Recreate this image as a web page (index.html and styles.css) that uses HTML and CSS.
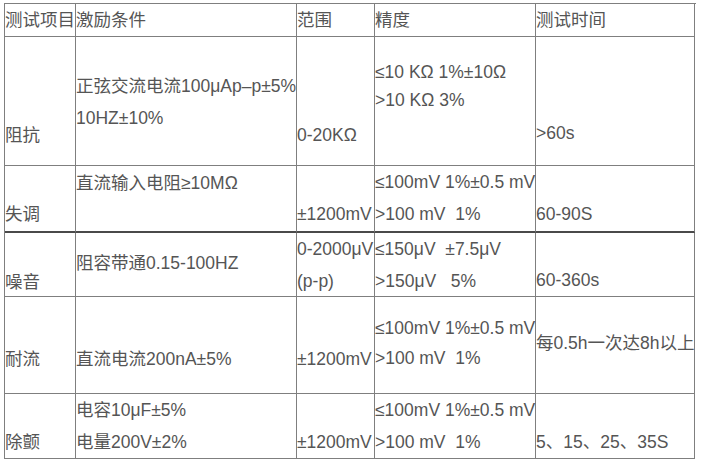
FILE: index.html
```html
<!DOCTYPE html>
<html lang="zh-CN">
<head>
<meta charset="utf-8">
<title>测试项目</title>
<link rel="stylesheet" href="styles.css">
</head>
<body>
<div class="spec">
  <div class="cell">测试项目</div>
  <div class="cell">激励条件</div>
  <div class="cell">范围</div>
  <div class="cell">精度</div>
  <div class="cell">测试时间</div>

  <div class="cell o82">阻抗</div>
  <div class="cell o33"><p>正弦交流电流100μAp–p±5%</p><p>10HZ±10%</p></div>
  <div class="cell o82">0-20KΩ</div>
  <div class="cell o21 tight"><p>≤10 KΩ 1%±10Ω</p><p>&gt;10 KΩ 3%</p></div>
  <div class="cell o80">&gt;60s</div>

  <div class="cell thick o32">失调</div>
  <div class="cell thick o1">直流输入电阻≥10MΩ</div>
  <div class="cell thick o32">±1200mV</div>
  <div class="cell thick"><p>≤100mV 1%±0.5 mV</p><p>&gt;100 mV&nbsp; 1%</p></div>
  <div class="cell thick o32">60-90S</div>

  <div class="cell o33">噪音</div>
  <div class="cell o14">阻容带通0.15-100HZ</div>
  <div class="cell"><p>0-2000μV</p><p>(p-p)</p></div>
  <div class="cell"><p>≤150μV&nbsp; ±7.5μV</p><p>&gt;150μV&nbsp;&nbsp; 5%</p></div>
  <div class="cell o31">60-360s</div>

  <div class="cell o46">耐流</div>
  <div class="cell o46">直流电流200nA±5%</div>
  <div class="cell o46">±1200mV</div>
  <div class="cell o15 mid"><p>≤100mV 1%±0.5 mV</p><p>&gt;100 mV&nbsp; 1%</p></div>
  <div class="cell o30">每0.5h一次达8h以上</div>

  <div class="cell o32">除颤</div>
  <div class="cell"><p>电容10μF±5%</p><p>电量200V±2%</p></div>
  <div class="cell o32">±1200mV</div>
  <div class="cell"><p>≤100mV 1%±0.5 mV</p><p>&gt;100 mV&nbsp; 1%</p></div>
  <div class="cell o32">5、15、25、35S</div>
</div>
</body>
</html>
```

FILE: styles.css
```css
html, body {
  margin: 0;
  padding: 0;
  background: #ffffff;
}

body {
  padding: 3px 0 0 4px;
  font-family: "Liberation Sans", "Noto Sans CJK SC", sans-serif;
  font-size: 17.5px;
  color: #555555;
}

.spec {
  display: grid;
  grid-template-columns: 71px 221px 78px 161px 159px;
  grid-template-rows: 33px 129px 67px 64px 97px 65px;
  width: 691px;
  border-top: 1px solid #7f7f7f;
  border-left: 1px solid #7f7f7f;
  box-sizing: content-box;
}

.cell {
  box-sizing: border-box;
  border-right: 1px solid #7f7f7f;
  border-bottom: 1px solid #7f7f7f;
  line-height: 32px;
  white-space: nowrap;
  overflow: visible;
}

.cell p {
  margin: 0;
}

.cell.thick {
  border-bottom: 2px solid #4a4a4a;
}

.cell.tight {
  line-height: 28px;
}

.cell.mid {
  line-height: 30px;
}

.o1 { padding-top: 1px; }
.o14 { padding-top: 14px; }
.o15 { padding-top: 16px; }
.o21 { padding-top: 21px; }
.o30 { padding-top: 30px; }
.o31 { padding-top: 31px; }
.o32 { padding-top: 32px; }
.o33 { padding-top: 33px; }
.o46 { padding-top: 46px; }
.o80 { padding-top: 80px; }
.o82 { padding-top: 82px; }
```
